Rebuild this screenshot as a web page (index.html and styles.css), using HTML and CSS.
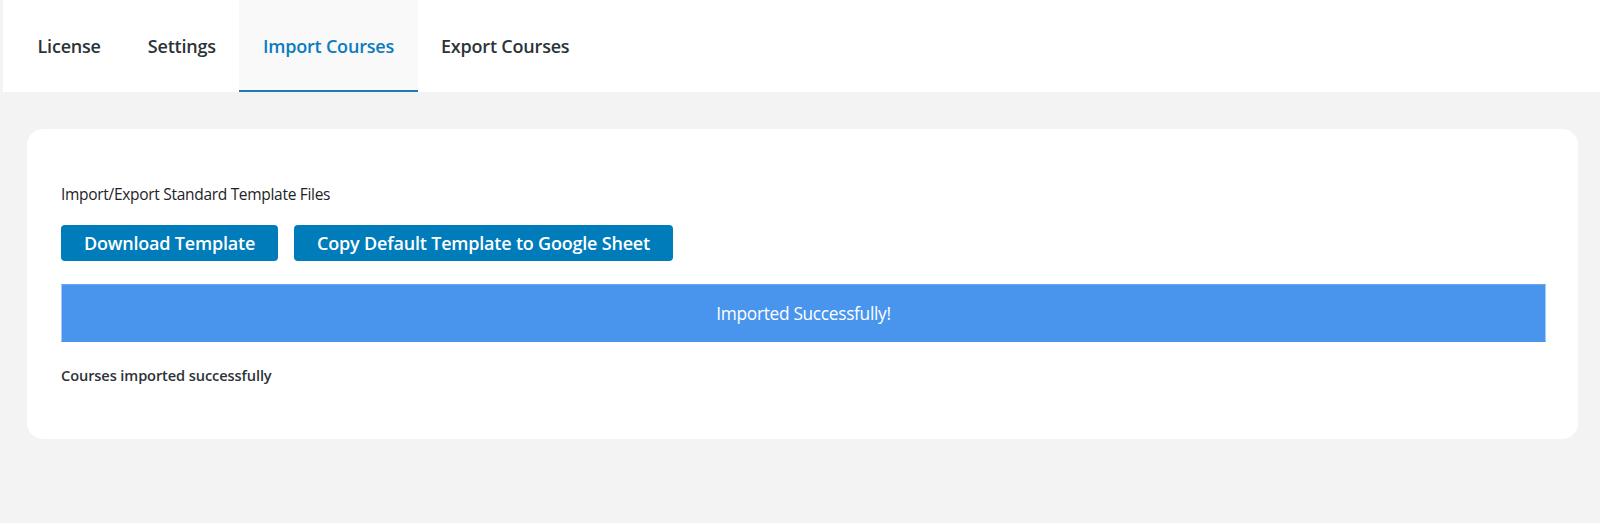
FILE: index.html
```html
<!DOCTYPE html>
<html lang="en">
<head>
<meta charset="utf-8">
<title>Import Courses</title>
<link rel="stylesheet" href="styles.css">
</head>
<body>
<div class="page">
  <nav class="tabs">
    <a class="tab">License</a>
    <a class="tab">Settings</a>
    <a class="tab active">Import Courses</a>
    <a class="tab">Export Courses</a>
  </nav>
  <main class="content">
    <section class="card">
      <p class="label">Import/Export Standard Template Files</p>
      <div class="actions">
        <button class="btn">Download Template</button>
        <button class="btn">Copy Default Template to Google Sheet</button>
      </div>
      <div class="notice">Imported Successfully!</div>
      <p class="status">Courses imported successfully</p>
    </section>
  </main>
</div>
</body>
</html>
```

FILE: styles.css
```css
* { box-sizing: border-box; }
html, body { margin: 0; padding: 0; }
body {
  background: #f3f3f3;
  font-family: "Open Sans", "Noto Sans", sans-serif;
  color: #1d2327;
}
.page { padding-left: 3px; }
.tabs {
  display: flex;
  height: 92px;
  background: #fff;
  padding-left: 11px;
}
.tab {
  display: flex;
  align-items: center;
  padding: 0 23.5px;
  font-size: 18px;
  font-weight: 600;
  color: #2c3338;
  letter-spacing: -0.2px;
}
.tab.active {
  background: #f9f9f9;
  color: #0a7bbf;
  border-bottom: 2px solid #1f7ab8;
  padding-top: 2px;
}
.content { padding: 37px 22px 0 24px; }
.card {
  background: #fff;
  border-radius: 16px;
  padding: 54px 32px 0 34px;
  height: 310px;
}
.label {
  margin: 0;
  font-size: 15.5px;
  line-height: 22px;
  letter-spacing: -0.3px;
}
.actions {
  display: flex;
  gap: 16px;
  margin-top: 20px;
}
.btn {
  font-family: inherit;
  background: #007cba;
  color: #fff;
  border: none;
  border-radius: 4px;
  height: 36px;
  padding: 0 23px;
  font-size: 18px;
  font-weight: 600;
  letter-spacing: -0.2px;
}
.notice {
  margin-top: 23px;
  height: 58px;
  background: #4995ee;
  border: 1px solid #a7c9f5;
  border-top-color: #6aa8f2;
  border-bottom-color: #4995ee;
  color: #fff;
  display: flex;
  align-items: center;
  justify-content: center;
  font-size: 17.3px;
  letter-spacing: -0.3px;
}
.status {
  margin: 23px 0 0;
  font-size: 14.6px;
  line-height: 20px;
  font-weight: 600;
  color: #2c3338;
  letter-spacing: -0.1px;
}
```
